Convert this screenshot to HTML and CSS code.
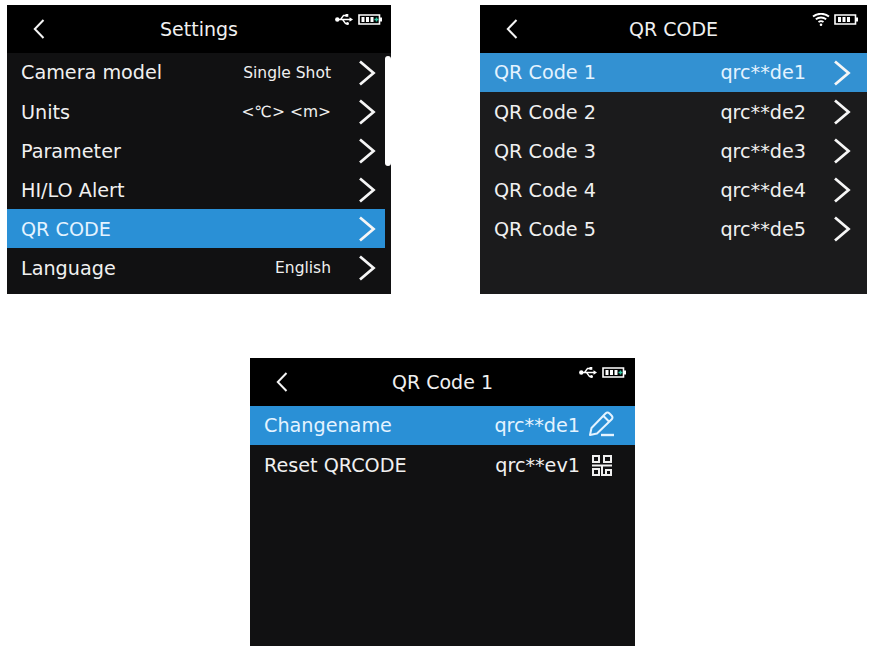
FILE: index.html
```html
<!DOCTYPE html>
<html lang="en">
<head>
<meta charset="utf-8">
<title>Settings screens</title>
<link rel="stylesheet" href="styles.css">
</head>
<body>
<svg class="defs" width="0" height="0" aria-hidden="true">
  <symbol id="chev" viewBox="0 0 18 26"><path d="M2 1.500 15.500 13 2 24.500" fill="none" stroke="currentColor" stroke-width="2.800"/></symbol>
  <symbol id="back" viewBox="0 0 12 20"><path d="M10.500 1 1.800 10l8.700 9" fill="none" stroke="currentColor" stroke-width="2"/></symbol>
  <symbol id="usb" viewBox="0 0 18 13"><circle cx="2.300" cy="6.500" r="2.200" fill="#fff"/><path d="M2 6.500h13M5.500 6.500 8.500 2.500h3M7.500 6.500l3 4h2" fill="none" stroke="#fff" stroke-width="1.300"/><path d="M14.500 4.300 18 6.500l-3.500 2.200z" fill="#fff"/><rect x="10.500" y="1" width="2.800" height="2.800" fill="#fff"/><circle cx="12.500" cy="10.500" r="1.500" fill="#fff"/></symbol>
  <symbol id="batt-c" viewBox="0 0 24 11"><path d="M1 1h20.500v9H1z" fill="none" stroke="#fff" stroke-width="1.600"/><rect x="22" y="3.500" width="2" height="4" fill="#fff"/><path d="M3.500 3h3v5h-3zM8 3h3v5H8zM12.500 3h3v5h-3z" fill="#fff"/><path d="M16.500 5.500h4M18.500 3.500v4" stroke="#2fc6a4" stroke-width="1.500"/></symbol>
  <symbol id="batt" viewBox="0 0 24 11"><path d="M1 1h20.500v9H1z" fill="none" stroke="#fff" stroke-width="1.600"/><rect x="22" y="3.500" width="2" height="4" fill="#fff"/><path d="M4 3h3v5H4zM8.500 3h3v5h-3zM13 3h3v5h-3z" fill="#fff"/></symbol>
  <symbol id="wifi" viewBox="0 0 18 13"><path d="M1 3.500C5.500-.2 12.500-.2 17 3.500M3.800 6.300c3-2.400 7.400-2.400 10.400 0M6.500 9c1.500-1.100 3.500-1.100 5 0" fill="none" stroke="#fff" stroke-width="1.800"/><circle cx="9" cy="11.700" r="1.300" fill="#fff"/></symbol>
  <symbol id="pen" viewBox="0 0 27 26"><path d="M2 24l1.500-7L17.500 2.500q2-2 4 0l2 2q2 2 0 4L9 22.500z M15.500 5l6 6" fill="none" stroke="currentColor" stroke-width="2" stroke-linejoin="round"/><path d="M13 24h13" stroke="currentColor" stroke-width="2.400"/></symbol>
  <symbol id="qr" viewBox="0 0 20 21"><g fill="none" stroke="currentColor" stroke-width="2"><rect x="1" y="1" width="6" height="6"/><rect x="12" y="1" width="7" height="6"/><rect x="1" y="14" width="6" height="6"/><path d="M0 10.500h20M10 10.500V21M10 20h10M14 20v-5h5v5"/></g></symbol>
</svg>
<main class="sheet">
  <div class="top-row">
    <section class="screen screen-settings">
      <header class="bar">
        <svg class="back"><use href="#back"/></svg>
        <h1 class="title">Settings</h1>
        <div class="status"><svg class="ic-usb"><use href="#usb"/></svg><svg class="ic-batt"><use href="#batt-c"/></svg></div>
      </header>
      <ul class="list list-narrow">
        <li class="row"><span class="name">Camera model</span><span class="val small">Single Shot</span><svg class="chev"><use href="#chev"/></svg></li>
        <li class="row"><span class="name">Units</span><span class="val small">&lt;℃&gt; &lt;m&gt;</span><svg class="chev"><use href="#chev"/></svg></li>
        <li class="row"><span class="name">Parameter</span><svg class="chev"><use href="#chev"/></svg></li>
        <li class="row"><span class="name">HI/LO Alert</span><svg class="chev"><use href="#chev"/></svg></li>
        <li class="row on"><span class="name">QR CODE</span><svg class="chev"><use href="#chev"/></svg></li>
        <li class="row"><span class="name">Language</span><span class="val small">English</span><svg class="chev"><use href="#chev"/></svg></li>
      </ul>
      <div class="scroll"></div>
    </section>
    <section class="screen screen-codes">
      <header class="bar">
        <svg class="back"><use href="#back"/></svg>
        <h1 class="title">QR CODE</h1>
        <div class="status"><svg class="ic-wifi"><use href="#wifi"/></svg><svg class="ic-batt"><use href="#batt"/></svg></div>
      </header>
      <ul class="list">
        <li class="row on"><span class="name">QR Code 1</span><span class="val">qrc**de1</span><svg class="chev"><use href="#chev"/></svg></li>
        <li class="row"><span class="name">QR Code 2</span><span class="val">qrc**de2</span><svg class="chev"><use href="#chev"/></svg></li>
        <li class="row"><span class="name">QR Code 3</span><span class="val">qrc**de3</span><svg class="chev"><use href="#chev"/></svg></li>
        <li class="row"><span class="name">QR Code 4</span><span class="val">qrc**de4</span><svg class="chev"><use href="#chev"/></svg></li>
        <li class="row"><span class="name">QR Code 5</span><span class="val">qrc**de5</span><svg class="chev"><use href="#chev"/></svg></li>
      </ul>
    </section>
  </div>
  <div class="bottom-row">
    <section class="screen screen-detail">
      <header class="bar">
        <svg class="back"><use href="#back"/></svg>
        <h1 class="title">QR Code 1</h1>
        <div class="status"><svg class="ic-usb"><use href="#usb"/></svg><svg class="ic-batt"><use href="#batt-c"/></svg></div>
      </header>
      <ul class="list">
        <li class="row on"><span class="name">Changename</span><span class="val">qrc**de1</span><svg class="ic-pen"><use href="#pen"/></svg></li>
        <li class="row"><span class="name">Reset QRCODE</span><span class="val wide">qrc**ev1</span><svg class="ic-qr"><use href="#qr"/></svg></li>
      </ul>
    </section>
  </div>
</main>
</body>
</html>
```
FILE: styles.css
```css
* { box-sizing: border-box; margin: 0; padding: 0; }
html, body { background: #fff; }
body { font-family: "DejaVu Sans", sans-serif; color: #f0f0f0; overflow: hidden; }
.defs { position: absolute; }
.sheet { width: 873px; height: 655px; padding-top: 5px; display: flex; flex-direction: column; gap: 64px; }
.top-row { display: flex; gap: 89px; padding-left: 7px; }
.bottom-row { display: flex; padding-left: 250px; }
.screen { position: relative; background: #111112; height: 289px; }
.screen-settings { width: 384px; }
.screen-codes { width: 387px; background: #1b1b1c; }
.screen-detail { width: 385px; height: 288px; }
.bar { position: relative; height: 48px; background: #000; display: flex; align-items: center; justify-content: center; }
.title { font-size: 19px; font-weight: 400; margin-top: -1px; }
.back { position: absolute; left: 26px; top: 14px; width: 12px; height: 20px; color: #f4f4f4; }
.status { position: absolute; right: 9px; top: 8px; display: flex; align-items: center; gap: 5px; }
.ic-usb { width: 18px; height: 13px; }
.ic-wifi { width: 18px; height: 13px; margin-right: -1px; }
.ic-batt { width: 24px; height: 11px; }
.list { list-style: none; }
.list-narrow { width: 378px; }
.row { height: 39px; display: flex; align-items: center; padding-left: 14px; font-size: 19.200px; }
.row + .row { padding-top: 1px; }
.row .name { flex: 1; white-space: nowrap; }
.row.on { background: #2a90d6; color: #e4f3ff; }
.val { white-space: nowrap; margin-right: 27px; }
.val.small { font-size: 15.500px; }
.chev { width: 18px; height: 26px; margin-right: 9px; flex: none; color: #f6f6f6; }
.screen-codes .row.on { background: #3391d2; }
.screen-codes .chev { margin-right: 16px; }
.screen-detail .val { margin-right: 8px; }
.screen-detail .val.wide { margin-right: 12px; }
.ic-pen { width: 27px; height: 26px; margin-right: 20px; margin-top: -3px; color: #e4f3ff; flex: none; }
.ic-qr { width: 20px; height: 21px; margin-right: 23px; color: #f0f0f0; flex: none; }
.scroll { position: absolute; left: 378px; top: 51px; width: 6px; height: 110px; background: #fff; border-radius: 3px; }
```
